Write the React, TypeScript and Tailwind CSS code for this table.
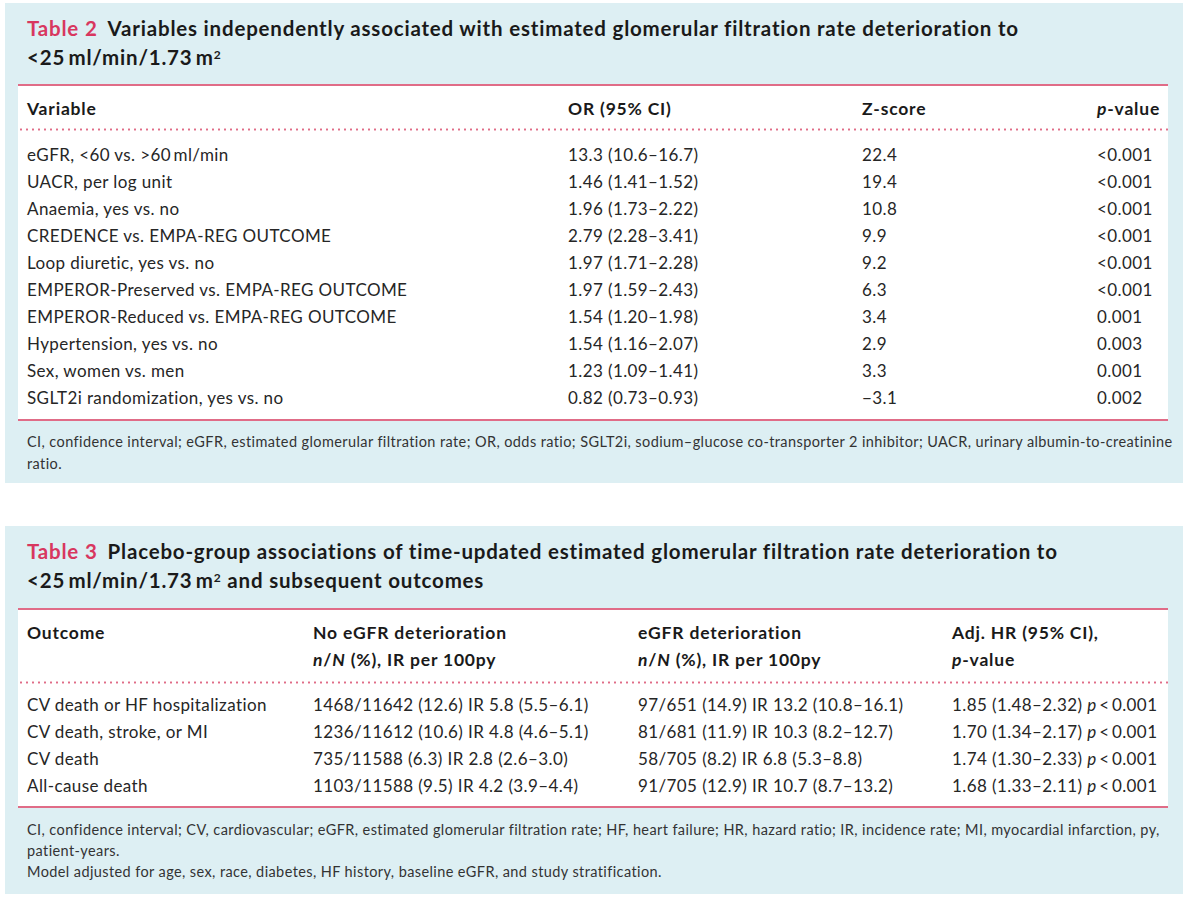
import React from "react"

const font = { fontFamily: "Lato, 'Open Sans', sans-serif" }

const thin = "\u2009"

function Dotted() {
  return (
    <div className="h-[3px] w-full bg-[radial-gradient(circle,#e06c87_0.9px,transparent_1.3px)] bg-[length:6px_3px] bg-repeat-x" />
  )
}

function PinkRule() {
  return <div className="h-[2px] w-full bg-[#e06c87]" />
}

function P() {
  return <i>p</i>
}

const table2Rows: [string, string, string, string][] = [
  [`eGFR, <60 vs. >60${thin}ml/min`, "13.3 (10.6–16.7)", "22.4", "<0.001"],
  ["UACR, per log unit", "1.46 (1.41–1.52)", "19.4", "<0.001"],
  ["Anaemia, yes vs. no", "1.96 (1.73–2.22)", "10.8", "<0.001"],
  ["CREDENCE vs. EMPA-REG OUTCOME", "2.79 (2.28–3.41)", "9.9", "<0.001"],
  ["Loop diuretic, yes vs. no", "1.97 (1.71–2.28)", "9.2", "<0.001"],
  ["EMPEROR-Preserved vs. EMPA-REG OUTCOME", "1.97 (1.59–2.43)", "6.3", "<0.001"],
  ["EMPEROR-Reduced vs. EMPA-REG OUTCOME", "1.54 (1.20–1.98)", "3.4", "0.001"],
  ["Hypertension, yes vs. no", "1.54 (1.16–2.07)", "2.9", "0.003"],
  ["Sex, women vs. men", "1.23 (1.09–1.41)", "3.3", "0.001"],
  ["SGLT2i randomization, yes vs. no", "0.82 (0.73–0.93)", "−3.1", "0.002"],
]

const table3Rows: [string, string, string, string][] = [
  ["CV death or HF hospitalization", "1468/11642 (12.6) IR 5.8 (5.5–6.1)", "97/651 (14.9) IR 13.2 (10.8–16.1)", "1.85 (1.48–2.32)"],
  ["CV death, stroke, or MI", "1236/11612 (10.6) IR 4.8 (4.6–5.1)", "81/681 (11.9) IR 10.3 (8.2–12.7)", "1.70 (1.34–2.17)"],
  ["CV death", "735/11588 (6.3) IR 2.8 (2.6–3.0)", "58/705 (8.2) IR 6.8 (5.3–8.8)", "1.74 (1.30–2.33)"],
  ["All-cause death", "1103/11588 (9.5) IR 4.2 (3.9–4.4)", "91/705 (12.9) IR 10.7 (8.7–13.2)", "1.68 (1.33–2.11)"],
]

function Title({ num, children }: { num: string; children: React.ReactNode }) {
  return (
    <div className="whitespace-nowrap px-[9px] text-[20.5px] font-bold leading-[29px] tracking-[0.8px] text-[#1a1a1a]">
      <span className="text-[#d8375f]">Table {num}</span>
      <span className="ml-[10px]">{children}</span>
    </div>
  )
}

function Unit() {
  return (
    <>
      {"<25" + thin + "ml/min/1.73" + thin + "m"}
      <sup className="text-[12px]">2</sup>
    </>
  )
}

export default function App() {
  return (
    <div className="min-h-[898px] bg-white pt-[3px] text-[#262626]" style={font}>
      {/* Table 2 */}
      <div className="ml-[5px] w-[1178px] bg-[#ddeff3] pl-[13px] pr-[15px] pt-[11px] pb-[8px]">
        <Title num="2">
          Variables independently associated with estimated glomerular filtration rate deterioration to
          <br />
          <Unit />
        </Title>
        <div className="mt-[12px]">
          <PinkRule />
          <div className="bg-white px-[9px]">
            <div className="grid grid-cols-[541px_294px_235px_1fr] whitespace-nowrap pt-[9px] pb-[6px] text-[17.5px] font-bold leading-[27px] tracking-[0.8px] text-[#1a1a1a]">
              <div>Variable</div>
              <div>OR (95% CI)</div>
              <div>Z-score</div>
              <div>
                <P />-value
              </div>
            </div>
          </div>
          <div className="bg-white">
            <Dotted />
          </div>
          <div className="bg-white px-[9px] pt-[10px] pb-[8px] text-[17px] leading-[27px] tracking-[0.4px]">
            {table2Rows.map((r) => (
              <div key={r[0]} className="grid grid-cols-[541px_294px_235px_1fr] whitespace-nowrap">
                <div>{r[0]}</div>
                <div>{r[1]}</div>
                <div>{r[2]}</div>
                <div>{r[3]}</div>
              </div>
            ))}
          </div>
          <PinkRule />
        </div>
        <div className="mr-[-14px] whitespace-nowrap px-[9px] pt-[10px] text-[14.5px] leading-[22px] tracking-[0.4px] text-[#333]">
          CI, confidence interval; eGFR, estimated glomerular filtration rate; OR, odds ratio; SGLT2i, sodium–glucose co-transporter 2 inhibitor; UACR, urinary albumin-to-creatinine
          <br />
          ratio.
        </div>
      </div>

      {/* Table 3 */}
      <div className="ml-[5px] mt-[43px] w-[1178px] bg-[#ddeff3] pl-[13px] pr-[15px] pt-[11px] pb-[12px]">
        <Title num="3">
          Placebo-group associations of time-updated estimated glomerular filtration rate deterioration to
          <br />
          <Unit /> and subsequent outcomes
        </Title>
        <div className="mt-[13px]">
          <PinkRule />
          <div className="bg-white px-[9px]">
            <div className="grid grid-cols-[286px_325px_314px_1fr] whitespace-nowrap pt-[9px] pb-[8px] text-[17.5px] font-bold leading-[27px] tracking-[0.8px] text-[#1a1a1a]">
              <div>Outcome</div>
              <div>
                No eGFR deterioration
                <br />
                <i>n</i>/<i>N</i> (%), IR per 100py
              </div>
              <div>
                eGFR deterioration
                <br />
                <i>n</i>/<i>N</i> (%), IR per 100py
              </div>
              <div>
                Adj. HR (95% CI),
                <br />
                <P />-value
              </div>
            </div>
          </div>
          <div className="bg-white">
            <Dotted />
          </div>
          <div className="bg-white px-[9px] pt-[7px] pb-[7px] text-[17px] leading-[27px] tracking-[0.4px]">
            {table3Rows.map((r) => (
              <div key={r[0]} className="grid grid-cols-[286px_325px_314px_1fr] whitespace-nowrap">
                <div>{r[0]}</div>
                <div>{r[1]}</div>
                <div>{r[2]}</div>
                <div>
                  {r[3]} <P />
                  {thin + "<" + thin}0.001
                </div>
              </div>
            ))}
          </div>
          <PinkRule />
        </div>
        <div className="mr-[-14px] whitespace-nowrap px-[9px] pt-[11px] text-[14.5px] leading-[21px] tracking-[0.4px] text-[#333]">
          CI, confidence interval; CV, cardiovascular; eGFR, estimated glomerular filtration rate; HF, heart failure; HR, hazard ratio; IR, incidence rate; MI, myocardial infarction, py,
          <br />
          patient-years.
          <br />
          Model adjusted for age, sex, race, diabetes, HF history, baseline eGFR, and study stratification.
        </div>
      </div>
    </div>
  )
}
